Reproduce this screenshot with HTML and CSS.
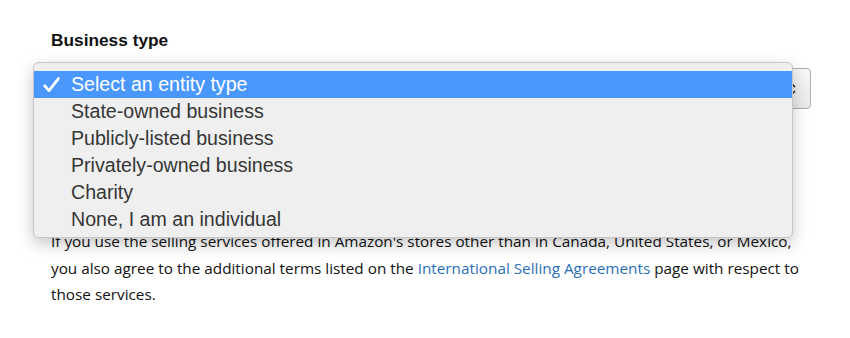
FILE: index.html
```html
<!DOCTYPE html>
<html>
<head>
<meta charset="utf-8">
<link rel="stylesheet" href="styles.css">
</head>
<body>
<div class="page">
  <div class="field">
    <div class="label">Business type</div>
    <div class="select">
      <span class="select-value">Select an entity type</span>
      <svg class="arrows" width="8" height="14" viewBox="0 0 8 14"><path d="M1 5 L4 2 L7 5" fill="none" stroke="#222" stroke-width="1.6"/><path d="M1 9 L4 12 L7 9" fill="none" stroke="#222" stroke-width="1.6"/></svg>
    </div>
    <ul class="menu">
      <li class="opt selected"><svg class="check" width="17" height="16" viewBox="0 0 17 16"><path d="M1.8 8.8 L6 13.6 L15.4 1.6" fill="none" stroke="#fff" stroke-width="2.8" stroke-linecap="round" stroke-linejoin="round"/></svg>Select an entity type</li>
      <li class="opt">State-owned business</li>
      <li class="opt">Publicly-listed business</li>
      <li class="opt">Privately-owned business</li>
      <li class="opt">Charity</li>
      <li class="opt">None, I am an individual</li>
    </ul>
  </div>
  <p class="terms">If you use the selling services offered in Amazon's stores other than in Canada, United States, or Mexico, you also agree to the additional terms listed on the <a class="link" href="#">International Selling Agreements</a> page with respect to those services.</p>
</div>
</body>
</html>
```

FILE: styles.css
```css
html, body {
  margin: 0;
  padding: 0;
  background: #ffffff;
}
.page {
  padding: 29px 39px 0 51px;
  font-family: "Open Sans", "Liberation Sans", sans-serif;
  color: #111;
}
.field {
  position: relative;
}
.label {
  font-family: "Liberation Sans", Arial, sans-serif;
  font-weight: bold;
  font-size: 17.3px;
  line-height: 22px;
  color: #111;
}
.select {
  margin-top: 17px;
  width: 760px;
  height: 41px;
  box-sizing: border-box;
  border: 1px solid #adadad;
  border-radius: 4px;
  background: linear-gradient(#f7f7f7, #e9e9e9);
  display: flex;
  align-items: center;
  justify-content: space-between;
  padding: 0 14px 0 12px;
  font-family: "Liberation Sans", Arial, sans-serif;
  font-size: 16px;
  color: #111;
}
.arrows {
  display: block;
}
.menu {
  position: absolute;
  left: -18px;
  top: 33px;
  width: 760px;
  height: 176px;
  box-sizing: border-box;
  margin: 0;
  padding: 8px 0 0 0;
  list-style: none;
  background: #efefef;
  border: 1px solid #c6c6c6;
  border-radius: 6px;
  box-shadow: 0 6px 16px rgba(0, 0, 0, 0.22);
  z-index: 2;
  font-family: "Liberation Sans", Arial, sans-serif;
  font-size: 19.6px;
  color: #363636;
}
.opt {
  position: relative;
  height: 27px;
  line-height: 27px;
  padding-left: 37px;
}
.opt.selected {
  background: #4a98fd;
  color: #ffffff;
}
.check {
  position: absolute;
  left: 9px;
  top: 6px;
}
.terms {
  margin: 119px 0 0 0;
  font-size: 15.3px;
  line-height: 26.5px;
  color: #111;
}
.link {
  color: #2a6fb8;
  text-decoration: none;
}
```
